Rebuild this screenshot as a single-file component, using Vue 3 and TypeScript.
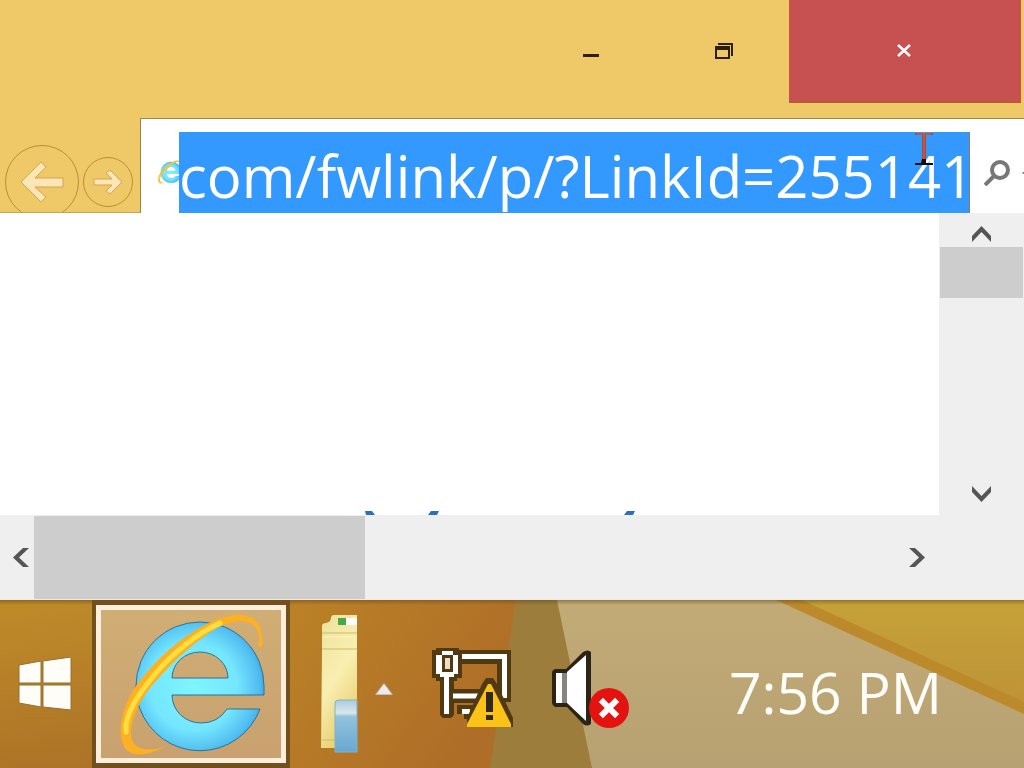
<script setup lang="ts">
import { ref } from 'vue'

const address = ref<string>('com/fwlink/p/?LinkId=255141')
const time = ref<string>('7:56 PM')
</script>

<template>
  <div class="screen">
    <svg class="defs" aria-hidden="true">
      <defs>
        <radialGradient id="ie-blue" cx="0.45" cy="0.5" r="0.62">
          <stop offset="0" stop-color="#7ef6ff" />
          <stop offset="0.55" stop-color="#74e6ff" />
          <stop offset="0.82" stop-color="#52bdf0" />
          <stop offset="1" stop-color="#3390d2" />
        </radialGradient>
        <symbol id="ie-logo" viewBox="119 610 147 145">
          <path
            fill="url(#ie-blue)"
            stroke="#28739a"
            stroke-width="1"
            fill-rule="evenodd"
            d="M264 693H172A29 28 0 0 0 201 721Q218 721 227 707H260A64 64 0 0 1 140 707Q135 696 136 684A64 64 0 0 1 264 684ZM172 676H228A28 26 0 0 0 172 676Z"
          />
          <path
            fill="#fdb022"
            d="M262 645C265 619 250 609 228 614C193 622 150 660 131 692C121 711 118 729 123 742C128 756 145 755 167 744C148 751 132 748 131 733C130 717 142 693 157 678C175 657 197 638 217 626C235 617 250 617 256 626C260 632 260 638 258 644Z"
          />
          <path
            d="M126 730C124 710 142 688 156 671C172 652 196 632 220 621"
            fill="none"
            stroke="#ffdf3e"
            stroke-width="5"
            stroke-linecap="round"
          />
        </symbol>
      </defs>
    </svg>

    <main class="browser">
      <header class="titlebar">
        <button class="caption" aria-label="Minimize">
          <svg width="16" height="16" viewBox="0 0 16 16"><path d="M0 11h16v3H0z" fill="#2e1f08" /></svg>
        </button>
        <button class="caption restore" aria-label="Restore">
          <svg width="18" height="16" viewBox="0 0 18 16" fill="#2e1f08">
            <path fill-rule="evenodd" d="M0 3h15v13H0zM2 7v7h11V7z" />
            <path d="M3 0h15v13h-2V2H3z" />
          </svg>
        </button>
        <button class="caption close" aria-label="Close">
          <svg width="14" height="13" viewBox="0 0 14 13"><path d="M1 1l12 11M13 1L1 12" stroke="#fff" stroke-width="2.500" /></svg>
        </button>
      </header>

      <nav class="navbar">
        <div class="history">
          <button class="back" aria-label="Back">
            <svg width="44" height="42" viewBox="0 0 44 42">
              <path d="M1 21L21 1l5 5-11 11h28v9H15l11 10-5 5z" fill="#fce6b6" stroke="#d3a352" />
            </svg>
          </button>
          <button class="forward" aria-label="Forward">
            <svg width="30" height="26" viewBox="0 0 30 26">
              <path d="M29 13L17 1l-4 3 6 6H1v6h18l-6 6 4 3z" fill="#fce6b6" stroke="#d3a352" />
            </svg>
          </button>
        </div>
        <div class="address">
          <svg class="site-icon"><use href="#ie-logo" /></svg>
          <input v-model="address" type="text" aria-label="Address" spellcheck="false" />
          <svg class="beam" width="20" height="34" viewBox="0 0 20 34" aria-hidden="true">
            <path d="M1 1h18v2h-7v27h-4V3H1z" fill="#a84a3c" />
            <path d="M3 2h14M10 3v25" stroke="#e2603f" stroke-width="1" />
            <path d="M1 31h6l1-4h4v4h7v2H1z" fill="#150b10" />
          </svg>
          <button class="search" aria-label="Search">
            <svg width="26" height="26" viewBox="0 0 26 26" fill="none" stroke="#777">
              <circle cx="16" cy="10" r="8" stroke-width="4" />
              <path d="M10 16l-9 9" stroke-width="4" />
            </svg>
          </button>
          <button class="more" aria-label="Show address list">
            <svg width="3" height="4" viewBox="0 0 3 4"><path d="M0 1h3v2H1z" fill="#888" /></svg>
          </button>
        </div>
      </nav>

      <section class="view">
        <div class="page">
          <svg width="270" height="4" viewBox="0 0 270 4" aria-hidden="true">
            <path d="M0 0h7l3 4H1zM66 0h8l-2 4h-9zM262 0h8l-2 4h-9z" />
          </svg>
        </div>
        <div class="vscroll">
          <button class="step" aria-label="Scroll up">
            <svg width="19" height="16" viewBox="0 0 19 16"><path d="M0 10L9.500 0 19 10v6L9.500 6 0 16z" /></svg>
          </button>
          <div class="vthumb"></div>
          <button class="step down" aria-label="Scroll down">
            <svg width="19" height="16" viewBox="0 0 19 16"><path d="M0 6l9.500 10L19 6V0L9.500 10 0 0z" /></svg>
          </button>
        </div>
        <div class="hscroll">
          <button class="hstep left" aria-label="Scroll left">
            <svg width="16" height="19" viewBox="0 0 16 19"><path d="M10 0L0 9.500 10 19h6L6 9.500 16 0z" /></svg>
          </button>
          <div class="hthumb"></div>
          <button class="hstep right" aria-label="Scroll right">
            <svg width="16" height="19" viewBox="0 0 16 19"><path d="M6 0l10 9.500L6 19H0l10-9.500L0 0z" /></svg>
          </button>
        </div>
        <div class="corner"></div>
      </section>
    </main>

    <footer class="taskbar">
      <svg class="wallpaper" viewBox="0 0 1024 168" preserveAspectRatio="none" aria-hidden="true">
        <defs>
          <linearGradient id="wp-a" x1="0" y1="0" x2="0.35" y2="1">
            <stop offset="0" stop-color="#bf8b29" />
            <stop offset="1" stop-color="#ac7127" />
          </linearGradient>
          <linearGradient id="wp-b" x1="0" y1="0" x2="1" y2="0.5">
            <stop offset="0" stop-color="#bb8226" />
            <stop offset="1" stop-color="#ae6d28" />
          </linearGradient>
          <linearGradient id="wp-c" x1="0" y1="0" x2="0" y2="1">
            <stop offset="0" stop-color="#c3ab77" />
            <stop offset="1" stop-color="#b7a172" />
          </linearGradient>
          <linearGradient id="wp-d" x1="0" y1="0" x2="0" y2="1">
            <stop offset="0" stop-color="#c6a23a" />
            <stop offset="1" stop-color="#be9335" />
          </linearGradient>
          <linearGradient id="wp-shade" x1="0" y1="0" x2="0" y2="1">
            <stop offset="0" stop-color="#5c4a20" stop-opacity="0.5" />
            <stop offset="1" stop-color="#5c4a20" stop-opacity="0" />
          </linearGradient>
        </defs>
        <path d="M0 0h520v168H0z" fill="url(#wp-a)" />
        <path d="M290 0h226l-26 168H290z" fill="url(#wp-b)" />
        <path d="M516 0h60l30 168H490z" fill="#9c7d3c" />
        <path d="M557 0h467v168H592z" fill="url(#wp-c)" />
        <path d="M776 0h248v114z" fill="#bd8a2b" />
        <path d="M802 0h222v102z" fill="url(#wp-d)" />
        <path d="M0 0h1024v5H0z" fill="url(#wp-shade)" />
      </svg>

      <button class="start" aria-label="Start">
        <svg width="54" height="54" viewBox="0 0 54 54" fill="#fffdf8" stroke="#94702f" stroke-width="1">
          <path d="M1 8l22-4v22H1zM25 4l28-4v26H25zM1 28h22v22L1 46zM25 28h28v25l-28-3z" />
        </svg>
      </button>
      <button class="task-active" aria-label="Internet Explorer">
        <span class="tile"><svg class="ie"><use href="#ie-logo" /></svg></span>
      </button>
      <button class="explorer" aria-label="File Explorer">
        <svg width="38" height="140" viewBox="0 0 38 140">
          <defs>
            <linearGradient id="folder" x1="0" y1="0" x2="0.4" y2="1">
              <stop offset="0" stop-color="#eee29a" />
              <stop offset="0.55" stop-color="#f9efb1" />
              <stop offset="1" stop-color="#e8cf71" />
            </linearGradient>
            <linearGradient id="glass" x1="0" y1="0" x2="0" y2="1">
              <stop offset="0" stop-color="#a9cbdc" />
              <stop offset="0.25" stop-color="#d9e8ec" />
              <stop offset="0.32" stop-color="#93c2dd" />
              <stop offset="1" stop-color="#69a7d1" />
            </linearGradient>
          </defs>
          <path d="M2 12Q2 9 6 9Q11 8 11 4Q11 1 14 1H37V134H1L2 37z" fill="url(#folder)" />
          <path d="M2 19h35M2 35h35M2 126h14" stroke="#cdbb71" />
          <path d="M2 23h35" stroke="#fff4bd" />
          <path d="M18 4h19v7H18z" fill="#fff" />
          <path d="M18 4h8v7h-8z" fill="#46a847" />
          <path d="M15 138V89q0-3 4-3h18v52z" fill="url(#glass)" stroke="#7db3cc" />
        </svg>
      </button>
      <button class="overflow" aria-label="Show hidden icons">
        <svg width="18" height="12" viewBox="0 0 18 12"><path d="M9 0l9 12H0z" fill="#eeeaf0" stroke="#b09068" stroke-width="1" /></svg>
      </button>
      <button class="tray network" aria-label="Network: no internet access">
        <svg width="82" height="82" viewBox="0 0 82 82">
          <path d="M28 9H72V54M20 48H50" fill="none" stroke="#513a12" stroke-width="14" />
          <path d="M25 57h17v14H32v-5h-7z" fill="#513a12" />
          <path d="M4 0h23v2h3v28h-5v3h-3v34l-3 3h-8l-3-3V33H4v-3H0V2h4z" fill="#513a12" />
          <path d="M30 8.500H72.500V50M21 48H48" fill="none" stroke="#fff" stroke-width="5" />
          <path d="M30 61h8v5h-8z" fill="#fff" />
          <path d="M10 3h11v4h5v19h-4v3h-5v37h-5V29H8v-3H4V7h6z" fill="#fff" />
          <path d="M10 7h11v17H10z" fill="#513a12" />
          <path d="M13 10h5v11h-5z" fill="#eddcc6" />
          <path d="M54 30h7l4 6 16 34v9H35v-9l15-34z" fill="#513a12" />
          <path d="M56 36h3l20 40v3H35v-3z" fill="#fbc217" />
          <path d="M54 44h7v20h-7zM54 67h7v5h-7z" fill="#31291a" />
        </svg>
      </button>
      <button class="tray volume" aria-label="Speakers: muted">
        <svg width="78" height="78" viewBox="0 0 78 78">
          <path d="M3 19h11L31 2q5-3 8 0v72q-4 3-8 0L15 57H3q-3-2-3-4V23q0-3 3-4z" fill="#2d2418" />
          <path d="M4 23h6v30H4z" fill="#fff" />
          <path d="M10 23h5v30h-5z" fill="#888480" />
          <path d="M15 22L34 5v66L15 53z" fill="#fff" />
          <circle cx="57" cy="58" r="20" fill="#e31410" />
          <path d="M51 52l12 12M63 52L51 64" stroke="#fff" stroke-width="6" stroke-linecap="square" />
        </svg>
      </button>
      <time class="clock" datetime="19:56">{{ time }}</time>
    </footer>
  </div>
</template>

<style>
html,
body {
  margin: 0;
}
</style>

<style scoped>
* {
  box-sizing: border-box;
}
.screen {
  display: flex;
  flex-direction: column;
  min-height: 100vh;
  overflow: hidden;
  font-family: "Open Sans", "Noto Sans", sans-serif;
}
.defs {
  position: absolute;
  width: 0;
  height: 0;
}
svg {
  display: block;
  flex: none;
}
button {
  display: flex;
  align-items: center;
  justify-content: center;
  padding: 0;
  border: 0;
  background: transparent;
}
.browser {
  flex: 1;
  display: flex;
  flex-direction: column;
}
.titlebar {
  display: flex;
  justify-content: flex-end;
  align-items: flex-start;
  height: 118px;
  padding-right: 3px;
  background: #efc968;
}
.caption {
  width: 132px;
  height: 102px;
}
.restore {
  padding-left: 2px;
}
.close {
  width: 232px;
  height: 103px;
  padding-right: 2px;
  background: #c75050;
  border-bottom: 2px solid #b85b35;
}
.navbar {
  display: flex;
  height: 95px;
  background: #efc968;
}
.history {
  display: flex;
  align-items: center;
  gap: 4px;
  width: 140px;
  height: 95px;
  padding: 34px 0 0 5px;
  border-bottom: 1px solid #c8a650;
  overflow: hidden;
}
.back,
.forward {
  flex: none;
  border: 1px solid #b98e37;
  border-radius: 50%;
}
.back {
  width: 74px;
  height: 74px;
}
.forward {
  width: 50px;
  height: 50px;
}
.address {
  position: relative;
  flex: 1;
  min-width: 0;
  display: flex;
  padding-top: 13px;
  background: #fff;
  border-top: 1px solid #9c8a55;
  border-left: 1px solid #9c8448;
}
.site-icon {
  width: 24px;
  height: 24px;
  margin: 28px -3px 0 17px;
}
.address input {
  flex: 1;
  min-width: 0;
  height: 81px;
  padding: 5px 0 0;
  border: 0;
  border-right: 1px solid #8b7b6b;
  border-radius: 0;
  outline: none;
  background: #3399ff;
  color: #fff;
  font: 400 58px/76px "Open Sans", "Noto Sans", sans-serif;
}
.beam {
  position: absolute;
  top: 13px;
  right: 90px;
}
.search {
  width: 53px;
  height: 81px;
}
.more {
  width: 1px;
  height: 81px;
}
.view {
  flex: 1;
  display: grid;
  grid-template-columns: 1fr 85px;
  grid-template-rows: 1fr 85px;
  background: #efefef;
}
.view svg {
  fill: #555;
}
.page {
  display: flex;
  align-items: flex-end;
  padding-left: 365px;
  background: #fff;
  overflow: hidden;
}
.page svg {
  fill: #2f6fb8;
}
.vscroll {
  display: flex;
  flex-direction: column;
}
.step {
  height: 34px;
  padding-top: 8px;
}
.vthumb {
  height: 51px;
  margin: 0 1px;
  background: #cdcdcd;
}
.down {
  margin-top: auto;
  padding: 0 0 9px;
}
.hscroll {
  display: flex;
  border-bottom: 1px solid #f6e9dc;
  padding-top: 1px;
}
.corner {
  border-bottom: 1px solid #f6e9dc;
}
.hstep {
  width: 34px;
}
.left {
  padding-left: 8px;
}
.hthumb {
  width: 331px;
  background: #cdcdcd;
}
.right {
  margin-left: auto;
  padding-right: 10px;
}
.taskbar {
  position: relative;
  display: flex;
  align-items: center;
  height: 168px;
}
.taskbar > :not(.wallpaper) {
  position: relative;
  flex: none;
}
.wallpaper {
  position: absolute;
  inset: 0;
  width: 100%;
  height: 100%;
}
.start {
  width: 92px;
  height: 168px;
  padding-right: 3px;
}
.task-active {
  width: 198px;
  height: 168px;
  background: #71501e;
}
.tile {
  display: flex;
  align-items: center;
  justify-content: center;
  width: 190px;
  height: 158px;
  border: 5px solid #fbeedd;
  background: linear-gradient(#d1ae75, #c8a16f);
}
.ie {
  width: 147px;
  height: 145px;
  margin-left: 3px;
}
.explorer {
  margin-left: 30px;
}
.overflow {
  width: 52px;
  height: 168px;
  padding-top: 10px;
}
.network {
  margin-left: 22px;
  padding-top: 10px;
}
.volume {
  margin-left: 38px;
  padding-top: 10px;
}
.clock {
  margin-left: auto;
  padding: 16px 82px 0 0;
  color: #fffdf8;
  font-size: 57px;
  line-height: 80px;
  white-space: nowrap;
}
</style>
